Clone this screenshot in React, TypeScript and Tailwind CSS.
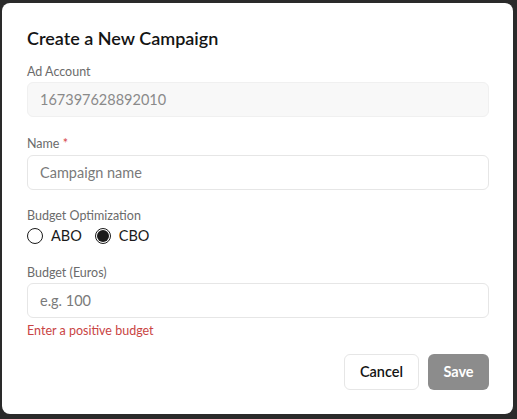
import React, { useState } from 'react'

const font = { fontFamily: 'Lato, "Noto Sans", sans-serif' }

const Label = ({ children, required }: { children: React.ReactNode; required?: boolean }) => (
    <div className="text-[12.5px] leading-4 text-[#6b6b6b]">
        {children}
        {required && <span className="text-[#d64545]"> *</span>}
    </div>
)

const Radio = ({ label, checked, onClick }: { label: string; checked: boolean; onClick: () => void }) => (
    <button type="button" onClick={onClick} className="flex items-center gap-[8px]">
        <span className="flex h-[16px] w-[16px] items-center justify-center rounded-full border border-[#1a1a1a]">
            {checked && <span className="h-[12px] w-[12px] rounded-full bg-[#1a1a1a]" />}
        </span>
        <span className="text-[14.5px] leading-5 text-[#1a1a1a]">{label}</span>
    </button>
)

export default function App() {
    const [mode, setMode] = useState<'ABO' | 'CBO'>('CBO')

    return (
        <div style={font} className="h-[419px] w-[517px] overflow-hidden bg-[#2a2a2a] pl-[2px] pt-[3px]">
            <div className="flex h-[411px] w-[511px] flex-col rounded-lg bg-white px-[25px] pt-[23px]">
                <h2 className="text-[18px] font-semibold leading-6 text-[#141414]">Create a New Campaign</h2>

                <div className="mt-[14px]">
                    <Label>Ad Account</Label>
                    <div className="mt-[2px] flex h-[35px] w-[462px] items-center rounded-md border border-[#f0f0f0] bg-[#f8f8f8] px-[12px] text-[14.5px] text-[#8a8a8a]">
                        167397628892010
                    </div>
                </div>

                <div className="mt-[19px]">
                    <Label required>Name</Label>
                    <input
                        placeholder="Campaign name"
                        className="mt-[3px] h-[35px] w-[462px] rounded-md border border-[#e6e6e6] bg-white px-[12px] text-[14.5px] text-[#1a1a1a] outline-none placeholder:text-[#7a7a7a]"
                    />
                </div>

                <div className="mt-[18px]">
                    <Label>Budget Optimization</Label>
                    <div className="mt-[2px] flex items-center gap-[13px]">
                        <Radio label="ABO" checked={mode === 'ABO'} onClick={() => setMode('ABO')} />
                        <Radio label="CBO" checked={mode === 'CBO'} onClick={() => setMode('CBO')} />
                    </div>
                </div>

                <div className="mt-[19px]">
                    <Label>Budget (Euros)</Label>
                    <input
                        placeholder="e.g. 100"
                        className="mt-[2px] h-[35px] w-[462px] rounded-md border border-[#e6e6e6] bg-white px-[12px] text-[14.5px] text-[#1a1a1a] outline-none placeholder:text-[#7a7a7a]"
                    />
                    <div className="mt-[5px] text-[12.5px] leading-4 text-[#c94444]">Enter a positive budget</div>
                </div>

                <div className="mt-[15px] flex w-[462px] justify-end gap-[9px]">
                    <button className="h-[36px] w-[75px] rounded-md border border-[#e6e6e6] bg-white text-[14.5px] font-semibold text-[#141414]">
                        Cancel
                    </button>
                    <button className="h-[36px] w-[61px] rounded-md bg-[#8c8c8c] text-[14.5px] font-bold text-white">
                        Save
                    </button>
                </div>
            </div>
        </div>
    )
}
